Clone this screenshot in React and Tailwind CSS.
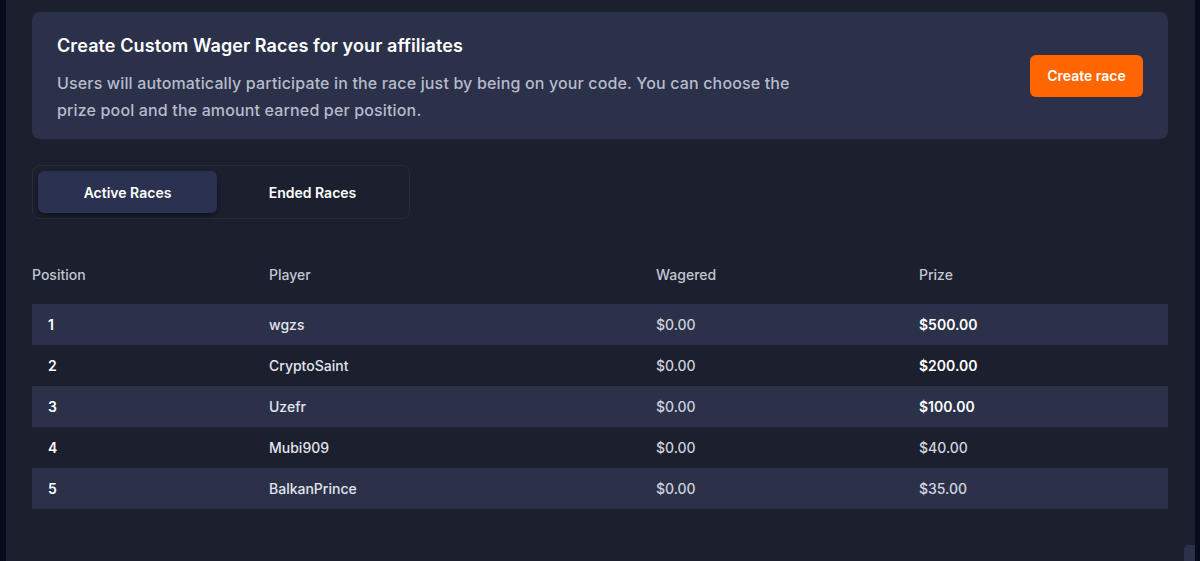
import React from 'react'

const rows = [
  { pos: 1, player: 'wgzs', wagered: '$0.00', prize: '$500.00', top: true },
  { pos: 2, player: 'CryptoSaint', wagered: '$0.00', prize: '$200.00', top: true },
  { pos: 3, player: 'Uzefr', wagered: '$0.00', prize: '$100.00', top: true },
  { pos: 4, player: 'Mubi909', wagered: '$0.00', prize: '$40.00', top: false },
  { pos: 5, player: 'BalkanPrince', wagered: '$0.00', prize: '$35.00', top: false },
]

const App = () => {
  return (
    <div className="flex h-[561px] w-[1200px] overflow-hidden bg-[#070b1c] font-['Inter',sans-serif]">
      {/* left edge */}
      <div className="w-[6px] shrink-0" />

      {/* main panel */}
      <div className="relative flex-1 bg-[#1b1f2e] pl-[26px] pr-[27px] pt-3">
        {/* Banner card */}
        <div className="flex items-center justify-between rounded-lg bg-[#2b3149] pl-[25px] pr-[25px]">
          <div className="pt-5 pb-[15px]">
            <h2 className="text-[18px] font-semibold leading-7 tracking-[0.1px] text-white">
              Create Custom Wager Races for your affiliates
            </h2>
            <p className="mt-[10px] max-w-[760px] text-[16px] font-medium leading-[27px] tracking-[0.15px] text-[#b7bbcc]">
              Users will automatically participate in the race just by being on your code. You can choose the prize pool and the amount earned per position.
            </p>
          </div>
          <button className="flex h-[42px] w-[113px] items-center justify-center rounded-md bg-[#ff6500] text-[14px] font-semibold text-white">
            Create race
          </button>
        </div>

        {/* Tabs */}
        <div className="mt-[26px] flex w-[378px] gap-[6px] rounded-lg border border-[#272c3d] p-[5px]">
          <button className="flex h-[42px] w-[179px] items-center justify-center rounded-md bg-[#2b3150] text-[14px] font-semibold text-white shadow-md shadow-black/30">
            Active Races
          </button>
          <button className="flex h-[42px] w-[179px] items-center justify-center rounded-md text-[14px] font-semibold text-white">
            Ended Races
          </button>
        </div>

        {/* Table */}
        <div className="mt-[46px]">
          <div className="grid grid-cols-[237px_387px_263px_1fr] pb-[19px] text-[14px] font-medium leading-5 text-[#c3c6d1]">
            <div>Position</div>
            <div>Player</div>
            <div>Wagered</div>
            <div>Prize</div>
          </div>
          {rows.map((r, i) => (
            <div
              key={r.pos}
              className={`grid h-[41px] grid-cols-[237px_387px_263px_1fr] items-center text-[14px] ${i % 2 === 0 ? 'bg-[#2b3149]' : ''}`}
            >
              <div className="pl-4 font-semibold text-white">{r.pos}</div>
              <div className="font-medium text-[#e3e5ec]">{r.player}</div>
              <div className="font-medium text-[#cdd0d9]">{r.wagered}</div>
              <div className={r.top ? 'font-semibold text-white' : 'font-medium text-[#d3d6de]'}>{r.prize}</div>
            </div>
          ))}
        </div>

        {/* scroll corner */}
        <div className="absolute bottom-0 right-0 h-4 w-[11px] rounded-tl-sm bg-[#2b3149]" />
      </div>

      {/* right edge */}
      <div className="w-[5px] shrink-0" />
    </div>
  )
}

export default App
